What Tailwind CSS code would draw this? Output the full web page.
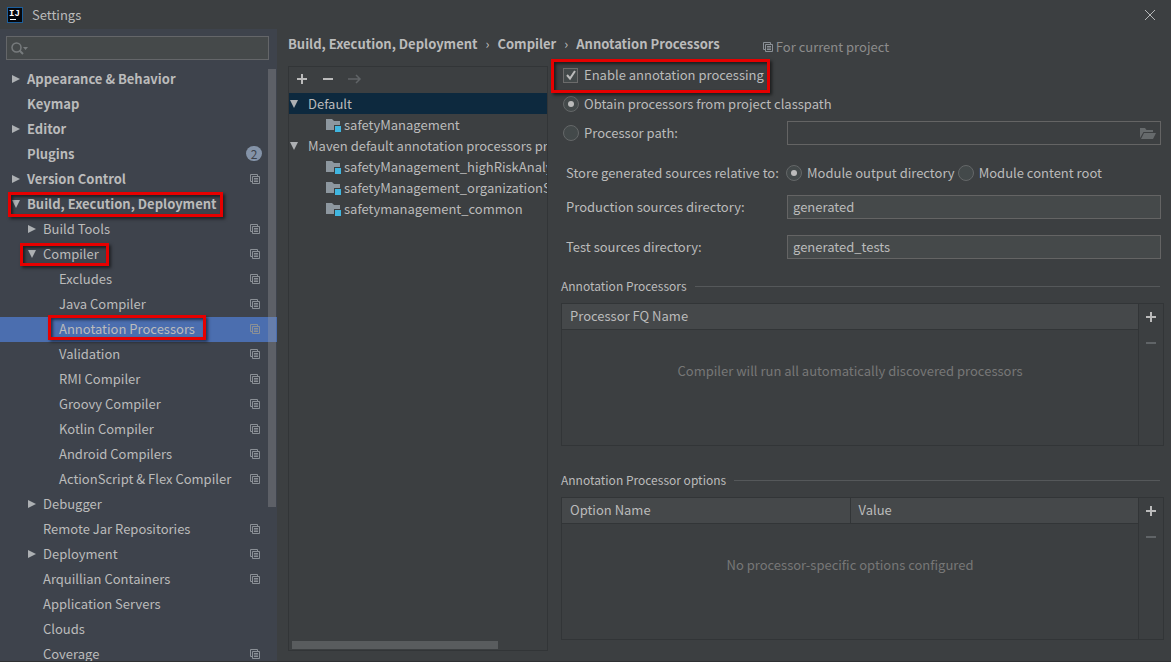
<!doctype html>
<html lang="en">
  <head>
    <meta charset="utf-8" />
    <meta name="viewport" content="width=device-width, initial-scale=1" />
    <title>Settings</title>
    <script src="https://cdn.jsdelivr.net/npm/@tailwindcss/browser@4"></script>
  </head>

  <body class="flex h-screen flex-col overflow-hidden bg-[#3c3f41] font-['Noto_Sans_CJK_SC',sans-serif] text-[13px] leading-5 text-[#bbbbbb]">
    <!-- Icon sprite -->
    <svg class="hidden">
      <symbol id="right" viewBox="0 0 8 8"><path d="M0 0 8 4 0 8z" fill="#adb0b3" /></symbol>
      <symbol id="down" viewBox="0 0 8 8"><path d="M0 0h8L4 8z" fill="#adb0b3" /></symbol>
      <symbol id="copy" viewBox="0 0 10 10">
        <path d="M2.5 7.5h-2v-7h7v2M2.5 2.5h7v7h-7zM4 4.5h4M4 6h4M4 7.5h4" fill="none" stroke="#8b9096" />
      </symbol>
      <symbol id="module" viewBox="0 0 16 14">
        <path d="M0 1h6l2 2h6v9H0z" fill="#8d979f" />
        <path d="M8 7h8v7H8z" fill="#3c3f41" />
        <path d="M9 8h6v6H9z" fill="#40b6e0" />
      </symbol>
      <symbol id="plus" viewBox="0 0 12 12"><path d="M6 1v10M1 6h10" stroke="currentColor" stroke-width="2" /></symbol>
      <symbol id="minus" viewBox="0 0 12 12"><path d="M1 6h10" stroke="currentColor" stroke-width="2" /></symbol>
    </svg>

    <header class="flex h-[29px] shrink-0 items-center pr-4 pl-[7px]">
      <svg class="size-4" viewBox="0 0 16 16">
        <rect width="16" height="16" fill="#1c5f9c" />
        <rect x="1" y="1" width="14" height="14" fill="#05070c" />
        <text x="2" y="9" fill="#fff" font-family="Liberation Mono" font-size="9" font-weight="bold">IJ</text>
        <path d="M3 12.5h6" stroke="#fff" />
      </svg>
      <span class="ml-[9px]">Settings</span>
      <button class="ml-auto" aria-label="Close">
        <svg class="size-[10px]" viewBox="0 0 10 10"><path d="M0 0l10 10M10 0 0 10" stroke="#b5b7b8" /></svg>
      </button>
    </header>

    <div class="flex min-h-0 flex-1">
      <!-- Settings tree -->
      <aside class="relative w-[277px] shrink-0 overflow-hidden bg-[#3e434c]">
        <div class="relative mt-[7px] mr-2 ml-1.5">
          <svg class="absolute top-[6px] left-[5px] h-[13px] w-[18px]" viewBox="0 0 18 13">
            <circle cx="5.5" cy="5.5" r="4.5" fill="none" stroke="#777b7d" stroke-width="1.5" />
            <path d="M8.500 8.500 12 12" stroke="#777b7d" stroke-width="2" />
            <path d="M12 5h5l-2.500 3z" fill="#777b7d" />
          </svg>
          <input type="search" aria-label="Search settings" class="block h-6 w-full border border-[#646669] bg-[#45494a] pl-7 outline-none" />
        </div>
        <nav class="mt-[7px]">
          <ul class="[&_a]:pb-0.5">
            <li class="font-bold"><a href="#" class="flex h-[25px] items-center gap-[7px] pr-[17px] pl-3"><svg class="size-2"><use href="#right" /></svg>Appearance &amp; Behavior</a></li>
            <li class="font-bold"><a href="#" class="flex h-[25px] items-center pl-[27px]">Keymap</a></li>
            <li class="font-bold"><a href="#" class="flex h-[25px] items-center gap-[7px] pr-[17px] pl-3"><svg class="size-2"><use href="#right" /></svg>Editor</a></li>
            <li class="font-bold">
              <a href="#" class="flex h-[25px] items-center pr-[15px] pl-[27px]">Plugins
                <span class="ml-auto flex h-[15px] w-4 items-center justify-center rounded-full bg-[#8493a8] text-xs font-normal text-[#3e434c]">2</span>
              </a>
            </li>
            <li class="font-bold"><a href="#" class="flex h-[25px] items-center gap-[7px] pr-[17px] pl-3"><svg class="size-2"><use href="#right" /></svg>Version Control<svg class="ml-auto size-[10px]"><use href="#copy" /></svg></a></li>
            <li class="relative font-bold">
              <a href="#" class="flex h-[25px] items-center gap-[7px] pr-[17px] pl-3"><svg class="size-2"><use href="#down" /></svg>Build, Execution, Deployment</a>
              <span class="absolute inset-y-0 left-2 w-[215px] border-3 border-[#e60000] shadow-[2px_2px_3px_#0008,inset_2px_2px_3px_#0008]"></span>
            </li>
            <li><a href="#" class="flex h-[25px] items-center gap-[7px] pr-[17px] pl-7"><svg class="size-2"><use href="#right" /></svg>Build Tools<svg class="ml-auto size-[10px]"><use href="#copy" /></svg></a></li>
            <li class="relative">
              <a href="#" class="flex h-[25px] items-center gap-[7px] pr-[17px] pl-7"><svg class="size-2"><use href="#down" /></svg>Compiler<svg class="ml-auto size-[10px]"><use href="#copy" /></svg></a>
              <span class="absolute inset-y-px left-5 w-[89px] border-3 border-[#e60000] shadow-[2px_2px_3px_#0008,inset_2px_2px_3px_#0008]"></span>
            </li>
            <li><a href="#" class="flex h-[25px] items-center pr-[17px] pl-[59px]">Excludes<svg class="ml-auto size-[10px]"><use href="#copy" /></svg></a></li>
            <li><a href="#" class="flex h-[25px] items-center pr-[17px] pl-[59px]">Java Compiler<svg class="ml-auto size-[10px]"><use href="#copy" /></svg></a></li>
            <li class="relative bg-[#4b6eaf]">
              <a href="#" class="flex h-[25px] items-center pr-[17px] pl-[59px]">Annotation Processors<svg class="ml-auto size-[10px]"><use href="#copy" /></svg></a>
              <span class="absolute -top-0.5 bottom-0.5 left-12 w-[158px] border-3 border-[#e60000] shadow-[2px_2px_3px_#0008,inset_2px_2px_3px_#0008]"></span>
            </li>
            <li><a href="#" class="flex h-[25px] items-center pr-[17px] pl-[59px]">Validation<svg class="ml-auto size-[10px]"><use href="#copy" /></svg></a></li>
            <li><a href="#" class="flex h-[25px] items-center pr-[17px] pl-[59px]">RMI Compiler<svg class="ml-auto size-[10px]"><use href="#copy" /></svg></a></li>
            <li><a href="#" class="flex h-[25px] items-center pr-[17px] pl-[59px]">Groovy Compiler<svg class="ml-auto size-[10px]"><use href="#copy" /></svg></a></li>
            <li><a href="#" class="flex h-[25px] items-center pr-[17px] pl-[59px]">Kotlin Compiler<svg class="ml-auto size-[10px]"><use href="#copy" /></svg></a></li>
            <li><a href="#" class="flex h-[25px] items-center pr-[17px] pl-[59px]">Android Compilers<svg class="ml-auto size-[10px]"><use href="#copy" /></svg></a></li>
            <li><a href="#" class="flex h-[25px] items-center pr-[17px] pl-[59px]">ActionScript &amp; Flex Compiler<svg class="ml-auto size-[10px]"><use href="#copy" /></svg></a></li>
            <li><a href="#" class="flex h-[25px] items-center gap-[7px] pr-[17px] pl-7"><svg class="size-2"><use href="#right" /></svg>Debugger</a></li>
            <li><a href="#" class="flex h-[25px] items-center pr-[17px] pl-[43px]">Remote Jar Repositories<svg class="ml-auto size-[10px]"><use href="#copy" /></svg></a></li>
            <li><a href="#" class="flex h-[25px] items-center gap-[7px] pr-[17px] pl-7"><svg class="size-2"><use href="#right" /></svg>Deployment<svg class="ml-auto size-[10px]"><use href="#copy" /></svg></a></li>
            <li><a href="#" class="flex h-[25px] items-center pr-[17px] pl-[43px]">Arquillian Containers<svg class="ml-auto size-[10px]"><use href="#copy" /></svg></a></li>
            <li><a href="#" class="flex h-[25px] items-center pl-[43px]">Application Servers</a></li>
            <li><a href="#" class="flex h-[25px] items-center pl-[43px]">Clouds</a></li>
            <li><a href="#" class="flex h-[25px] items-center pr-[17px] pl-[43px]">Coverage<svg class="ml-auto size-[10px]"><use href="#copy" /></svg></a></li>
          </ul>
        </nav>
        <!-- Scrollbar thumb -->
        <div class="absolute top-10 right-px h-[438px] w-2 bg-[#a6a6a6]/30"></div>
      </aside>

      <main class="flex min-w-0 flex-1 flex-col pr-[7px] pl-[11px]">
        <div class="flex h-[30px] shrink-0 items-center">
          <h1 class="flex gap-2 font-bold whitespace-nowrap">
            <span>Build, Execution, Deployment</span><span class="font-normal">›</span>
            <span>Compiler</span><span class="font-normal">›</span>
            <span>Annotation Processors</span>
          </h1>
          <p class="mt-[6px] ml-[43px] flex items-center gap-[3px] whitespace-nowrap text-[#8c8c8c]">
            <svg class="size-[10px]"><use href="#copy" /></svg>For current project
          </p>
        </div>

        <div class="flex min-h-0 flex-1">
          <!-- Profiles -->
          <section class="mt-[7px] mb-[10px] flex w-[260px] shrink-0 flex-col border border-[#323537]">
            <div class="flex h-[26px] items-center gap-[14px] pb-0.5 pl-[7px]">
              <button aria-label="Add"><svg class="block size-3"><use href="#plus" /></svg></button>
              <button aria-label="Remove"><svg class="block size-3"><use href="#minus" /></svg></button>
              <button aria-label="Move to" disabled>
                <svg class="block h-3 w-[14px]" viewBox="0 0 14 12" fill="none" stroke="#606467" stroke-width="1.500"><path d="M0 6h12M8 2l4 4-4 4" /></svg>
              </button>
            </div>
            <ul class="flex-1 overflow-hidden whitespace-nowrap">
              <li class="flex h-[21px] items-center gap-[10px] bg-[#0d293e] pl-px"><svg class="size-2 shrink-0"><use href="#down" /></svg>Default</li>
              <li class="flex h-[21px] items-center gap-0.5 pl-[37px]"><svg class="h-[14px] w-4 shrink-0"><use href="#module" /></svg>safetyManagement</li>
              <li class="flex h-[21px] items-center gap-[10px] pl-px"><svg class="size-2 shrink-0"><use href="#down" /></svg>Maven default annotation processors profile</li>
              <li class="flex h-[21px] items-center gap-0.5 pl-[37px]"><svg class="h-[14px] w-4 shrink-0"><use href="#module" /></svg>safetyManagement_highRiskAnalysis</li>
              <li class="flex h-[21px] items-center gap-0.5 pl-[37px]"><svg class="h-[14px] w-4 shrink-0"><use href="#module" /></svg>safetyManagement_organizationStructure</li>
              <li class="flex h-[21px] items-center gap-0.5 pl-[37px]"><svg class="h-[14px] w-4 shrink-0"><use href="#module" /></svg>safetymanagement_common</li>
            </ul>
            <div class="mb-px ml-[3px] h-2 w-4/5 bg-[#595c5e]"></div>
          </section>

          <!-- Profile options -->
          <form class="mb-[21px] ml-[13px] flex min-w-0 flex-1 flex-col">
            <div class="relative flex h-[34px] shrink-0 items-center gap-[6px] pb-0.5 pl-0.5">
              <span class="relative size-[15px]">
                <input id="enable" type="checkbox" checked class="peer block size-[15px] appearance-none border border-[#6b6b6b] bg-[#43494a]" />
                <svg class="pointer-events-none absolute inset-0 hidden size-[15px] peer-checked:block" viewBox="0 0 15 15"><path d="M4 7l3 3.500L12 3" fill="none" stroke="#bbb" stroke-width="2" /></svg>
              </span>
              <label for="enable">Enable annotation processing</label>
              <span class="pointer-events-none absolute inset-y-0 -left-[10px] w-[219px] border-3 border-[#e60000] shadow-[2px_2px_3px_#0008,inset_2px_2px_3px_#0008]"></span>
            </div>
            <div class="flex h-[22px] shrink-0 items-center gap-[5px] pl-0.5">
              <input id="obtain" name="source" type="radio" checked class="grid size-4 appearance-none place-content-center rounded-full border border-[#646768] bg-[#43494a] before:size-[6px] before:rounded-full checked:before:bg-[#bbbbbb]" />
              <label for="obtain">Obtain processors from project classpath</label>
            </div>
            <div class="flex h-9 shrink-0 items-center pr-[3px] pl-0.5">
              <div class="flex w-[224px] shrink-0 items-center gap-[5px]">
                <input id="path" name="source" type="radio" class="grid size-4 appearance-none place-content-center rounded-full border border-[#646768] bg-[#43494a] before:size-[6px] before:rounded-full checked:before:bg-[#bbbbbb]" />
                <label for="path">Processor path:</label>
              </div>
              <div class="relative flex-1">
                <input type="text" aria-label="Processor path" disabled class="block h-6 w-full border border-[#646464] pr-7 pl-[5px]" />
                <svg class="absolute top-[7px] right-[5px] h-[11px] w-4" viewBox="0 0 16 11" fill="#666a6c"><path d="M0 0h5l1.500 2H13v2H3.500L0 10zM4 5h12l-3 6H1z" /></svg>
              </div>
            </div>
            <div role="radiogroup" aria-labelledby="store" class="flex h-11 shrink-0 items-center pl-[5px]">
              <span id="store" class="w-[220px] shrink-0">Store generated sources relative to:</span>
              <input id="output" name="store" type="radio" checked class="mr-[5px] grid size-4 appearance-none place-content-center rounded-full border border-[#646768] bg-[#43494a] before:size-[6px] before:rounded-full checked:before:bg-[#bbbbbb]" />
              <label for="output" class="mr-[3px]">Module output directory</label>
              <input id="content" name="store" type="radio" class="mr-[5px] grid size-4 appearance-none place-content-center rounded-full border border-[#646768] bg-[#43494a] before:size-[6px] before:rounded-full checked:before:bg-[#bbbbbb]" />
              <label for="content">Module content root</label>
            </div>
            <div class="flex shrink-0 items-center pr-[3px] pl-[5px]">
              <label for="production" class="w-[221px] shrink-0">Production sources directory:</label>
              <input id="production" type="text" value="generated" class="h-6 min-w-0 flex-1 border border-[#646464] bg-[#45494a] px-[5px] pb-0.5" />
            </div>
            <div class="mt-4 flex shrink-0 items-center pr-[3px] pl-[5px]">
              <label for="tests" class="w-[221px] shrink-0">Test sources directory:</label>
              <input id="tests" type="text" value="generated_tests" class="h-6 min-w-0 flex-1 border border-[#646464] bg-[#45494a] px-[5px] pb-0.5" />
            </div>

            <h2 class="mt-[17px] mb-[7px] flex shrink-0 items-center gap-2 pr-1 text-xs leading-5 after:h-px after:flex-1 after:bg-[#55585a]">Annotation Processors</h2>
            <div class="flex min-h-0 flex-1 border border-[#323537]">
              <div class="flex-1 border-r border-[#323537]">
                <table class="w-full table-fixed text-left">
                  <thead>
                    <tr class="h-[25px] border-b border-[#323537] bg-[#45484a]"><th class="px-2 font-normal">Processor FQ Name</th></tr>
                  </thead>
                </table>
                <p class="mt-[31px] text-center text-[#777777]">Compiler will run all automatically discovered processors</p>
              </div>
              <div class="flex w-6 flex-col items-center gap-[14px] pt-[7px]">
                <button type="button" aria-label="Add processor"><svg class="block size-3"><use href="#plus" /></svg></button>
                <button type="button" aria-label="Remove processor" disabled class="text-[#606467]"><svg class="block size-3"><use href="#minus" /></svg></button>
              </div>
            </div>

            <h2 class="mt-[24px] mb-[7px] flex shrink-0 items-center gap-2 pr-1 text-xs leading-5 after:h-px after:flex-1 after:bg-[#55585a]">Annotation Processor options</h2>
            <div class="flex min-h-0 flex-1 border border-[#323537]">
              <div class="flex-1 border-r border-[#323537]">
                <table class="w-full table-fixed text-left">
                  <thead>
                    <tr class="h-[25px] border-b border-[#323537] bg-[#45484a]">
                      <th class="border-r border-[#323537] px-2 font-normal">Option Name</th>
                      <th class="px-2 font-normal">Value</th>
                    </tr>
                  </thead>
                </table>
                <p class="mt-[31px] text-center text-[#777777]">No processor-specific options configured</p>
              </div>
              <div class="flex w-6 flex-col items-center gap-[14px] pt-[7px]">
                <button type="button" aria-label="Add option"><svg class="block size-3"><use href="#plus" /></svg></button>
                <button type="button" aria-label="Remove option" disabled class="text-[#606467]"><svg class="block size-3"><use href="#minus" /></svg></button>
              </div>
            </div>
          </form>
        </div>
      </main>
    </div>
    <div class="h-px shrink-0 bg-[#2f3133]"></div>
  </body>
</html>
